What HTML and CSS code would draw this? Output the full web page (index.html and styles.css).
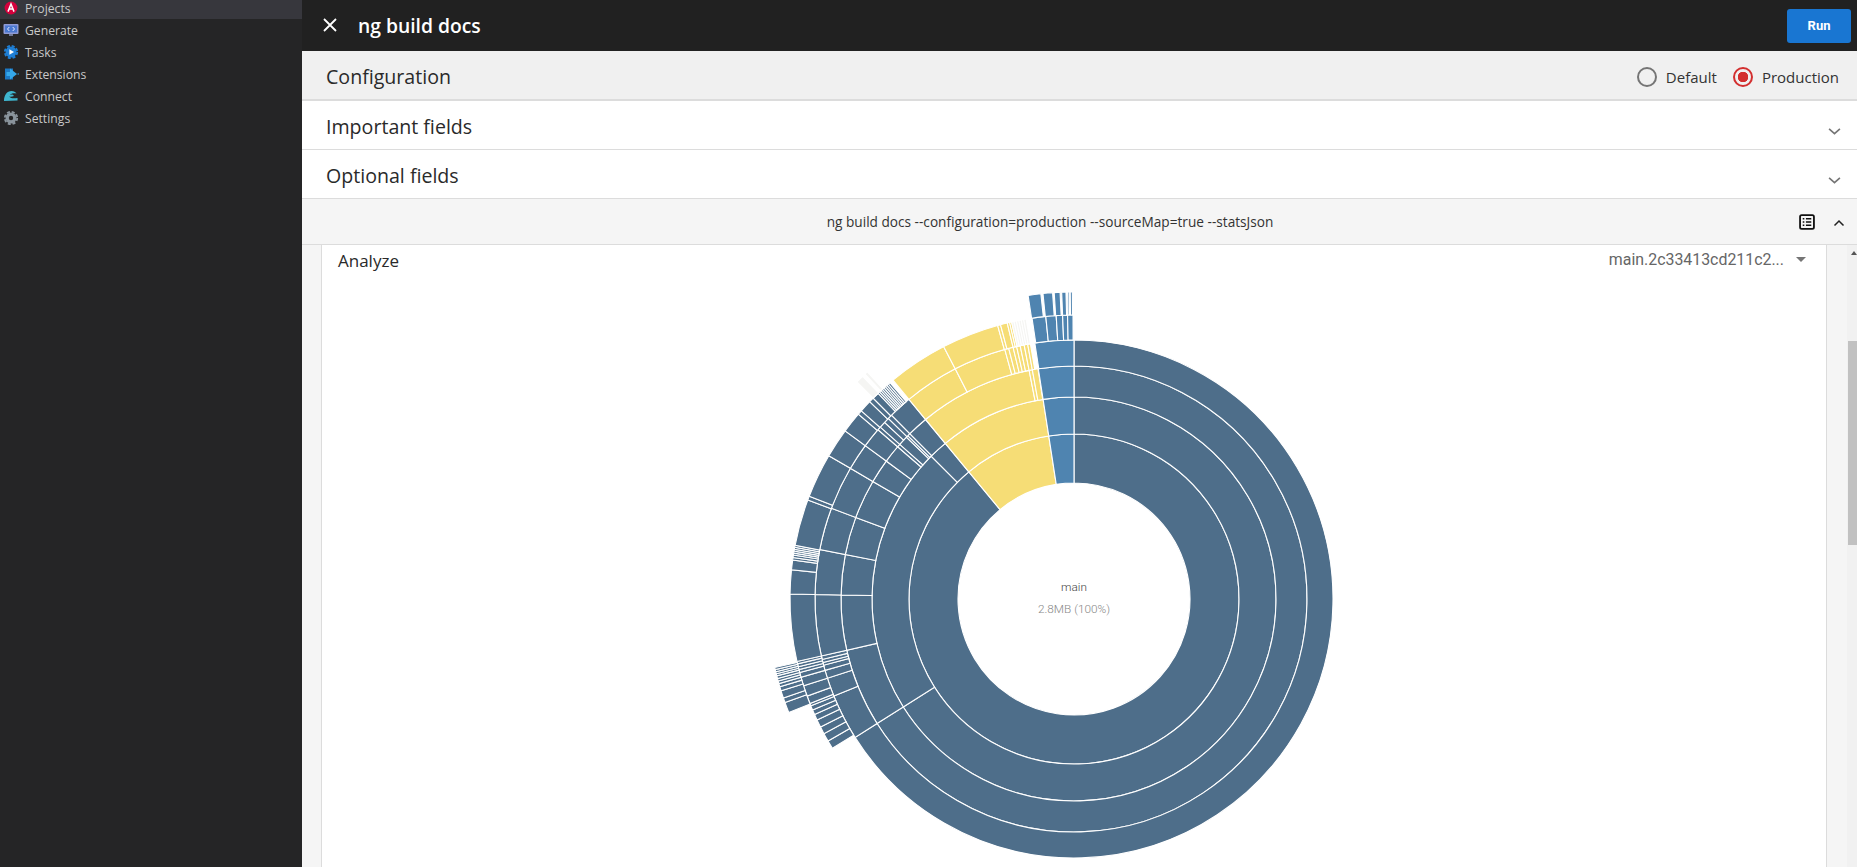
FILE: index.html
```html
<!DOCTYPE html>
<html lang="en">
<head>
<meta charset="utf-8">
<title>ng build docs</title>
<link rel="stylesheet" href="styles.css">
</head>
<body>
<aside class="sidebar">
  <nav class="nav">
    <a class="nav-item nav-item-active">
      <svg class="nav-icon" viewBox="0 0 16 16"><circle cx="8" cy="8" r="6.4" fill="#d5003c"/><path d="M5 11.6 8 4l3 7.6M6.1 9h3.8" fill="none" stroke="#fff" stroke-width="1.5"/></svg>
      <span>Projects</span>
    </a>
    <a class="nav-item">
      <svg class="nav-icon" viewBox="0 0 16 16"><rect x="0.5" y="2" width="15" height="10" rx="1" fill="#8f9bd6"/><rect x="2" y="3.5" width="12" height="7" fill="#4a78d0"/><path d="M6.3 5 4.5 7l1.8 2M9.7 5l1.8 2-1.8 2" fill="none" stroke="#e6ebff" stroke-width="1"/><rect x="6" y="12" width="4" height="2" fill="#6f7896"/></svg>
      <span>Generate</span>
    </a>
    <a class="nav-item">
      <svg class="nav-icon" viewBox="0 0 16 16"><circle cx="8" cy="8" r="5.500" fill="#1f7fd6"/><circle cx="8" cy="8" r="6.200" fill="none" stroke="#1f7fd6" stroke-width="1.800" stroke-dasharray="3 1.870"/><path d="M6.400 5.200 11 8l-4.600 2.800z" fill="#fff"/></svg>
      <span>Tasks</span>
    </a>
    <a class="nav-item">
      <svg class="nav-icon" viewBox="0 0 16 16"><rect x="2" y="2.500" width="8" height="11" fill="#1c79c4"/><path d="M7 2.500 14 8l-7 5.500V10H3.500V6H7z" fill="#35a8ea"/><path d="M14.500 8H16" stroke="#35a8ea"/></svg>
      <span>Extensions</span>
    </a>
    <a class="nav-item">
      <svg class="nav-icon" viewBox="0 0 16 16"><path d="M1 13c0-6 3-10 7.500-10 2.500 0 4 1 5 2.500-2-.6-5.500-.6-6.500 1.500 1.500-1 3.500-.5 4 1-2 .7-3 1-5 .5 1.500 2 5 2 8.500 1.500V12.500z" fill="#3fb6cf"/></svg>
      <span>Connect</span>
    </a>
    <a class="nav-item">
      <svg class="nav-icon" viewBox="0 0 16 16"><circle cx="8" cy="8" r="5.500" fill="#8a949c"/><circle cx="8" cy="8" r="6.200" fill="none" stroke="#8a949c" stroke-width="1.800" stroke-dasharray="3 1.870"/><circle cx="8" cy="8" r="2.200" fill="#252526"/></svg>
      <span>Settings</span>
    </a>
  </nav>
</aside>
<main class="main">
  <header class="topbar">
    <svg class="close-icon" viewBox="0 0 14 14"><path d="M1 1l12 12M13 1 1 13" fill="none" stroke="#fff" stroke-width="1.800"/></svg>
    <h1 class="title">ng build docs</h1>
    <button class="run-button">Run</button>
  </header>
  <section class="row row-config">
    <span class="row-label">Configuration</span>
    <div class="radios">
      <label class="radio-item"><span class="radio"></span>Default</label>
      <label class="radio-item"><span class="radio radio-on"></span>Production</label>
    </div>
  </section>
  <section class="row row-field">
    <span class="row-label">Important fields</span>
    <svg class="chevron" viewBox="0 0 12 8"><path d="M1 1.500 6 6l5-4.500" fill="none" stroke="#757575" stroke-width="1.500"/></svg>
  </section>
  <section class="row row-field">
    <span class="row-label">Optional fields</span>
    <svg class="chevron" viewBox="0 0 12 8"><path d="M1 1.500 6 6l5-4.500" fill="none" stroke="#757575" stroke-width="1.500"/></svg>
  </section>
  <section class="command-bar">
    <span class="command">ng build docs --configuration=production --sourceMap=true --statsJson</span>
    <svg class="list-icon" viewBox="0 0 15 15"><rect x="1" y="1" width="13" height="13" rx="1.500" fill="none" stroke="#111" stroke-width="1.700"/><path d="M3.500 4.500h1.500M3.500 7.500h1.500M3.500 10.500h1.500M6.500 4.500h5M6.500 7.500h5M6.500 10.500h5" stroke="#111" stroke-width="1.300"/></svg>
    <svg class="chevron-up" viewBox="0 0 12 8"><path d="M1.500 6.500 6 2l4.500 4.500" fill="none" stroke="#222" stroke-width="1.500"/></svg>
  </section>
  <section class="content">
    <div class="card">
      <div class="card-head">
        <span class="card-title">Analyze</span>
        <div class="select"><span>main.2c33413cd211c2...</span><span class="caret"></span></div>
      </div>
      <div class="chart-wrap">
        <svg id="sunburst" class="chart" viewBox="-320 -320 640 640" width="640" height="640"></svg>
      </div>
    </div>
    <div class="scrollbar">
      <span class="scroll-arrow"></span>
      <span class="scroll-thumb"></span>
    </div>
  </section>
</main>
<script src="chart.js"></script>
</body>
</html>
```
FILE: styles.css
```css
* { box-sizing: border-box; }
html, body { height: 100%; }
body {
  margin: 0;
  display: flex;
  overflow: hidden;
  font-family: "Open Sans", "Noto Sans", sans-serif;
  background: #fff;
}
.sidebar {
  width: 302px;
  flex: none;
  background: #252526;
  overflow: hidden;
}
.nav { margin-top: -3px; }
.nav-item {
  display: flex;
  align-items: center;
  height: 22px;
  padding-left: 3px;
  gap: 6px;
  color: #c8c8c8;
  font-size: 12.200px;
}
.nav-item-active { background: #37373d; }
.nav-icon { width: 16px; height: 16px; flex: none; }
.main {
  flex: 1;
  min-width: 0;
  display: flex;
  flex-direction: column;
}
.topbar {
  height: 51px;
  flex: none;
  display: flex;
  align-items: center;
  background: #212121;
  padding: 0 6px 0 21px;
}
.close-icon { width: 14px; height: 14px; margin-right: 21px; margin-top: -1px; }
.title {
  margin: 0;
  flex: 1;
  color: #fff;
  font-size: 19.300px;
  font-weight: 600;
}
.run-button {
  width: 64px;
  height: 34px;
  border: 0;
  border-radius: 3px;
  background: #1976d2;
  color: #fff;
  font-family: Roboto, sans-serif;
  font-size: 13px;
  font-weight: 700;
}
.row {
  flex: none;
  display: flex;
  align-items: center;
  justify-content: space-between;
  padding-top: 4px;
  padding-left: 24px;
  color: #2a2a2a;
  border-bottom: 1px solid #dcdcdc;
}
.row-config {
  height: 50px;
  background: #f0f0f0;
  padding-right: 18px;
  border-bottom-width: 2px;
}
.row-field {
  height: 49px;
  background: #fff;
  padding-right: 16px;
}
.row-label { font-size: 19.600px; margin-top: -2px; }
.radios { display: flex; gap: 16px; }
.radio-item {
  display: flex;
  align-items: center;
  gap: 9px;
  font-size: 15px;
  color: #333;
}
.radio {
  width: 20px;
  height: 20px;
  border-radius: 50%;
  border: 2px solid #757575;
}
.radio-on {
  border-color: #d32f2f;
  background: radial-gradient(circle, #d32f2f 0 5px, transparent 5.500px);
}
.chevron { width: 13px; height: 9px; margin-top: 8px; }
.command-bar {
  flex: none;
  height: 46px;
  display: flex;
  align-items: center;
  justify-content: center;
  position: relative;
  background: #f5f5f5;
  border-bottom: 1px solid #dcdcdc;
  padding: 0 54px 0 0;
}
.command {
  font-size: 13.650px;
  color: #333;
  margin-right: 5px;
}
.list-icon {
  position: absolute;
  right: 42px;
  top: 15px;
  width: 16px;
  height: 16px;
}
.chevron-up {
  position: absolute;
  right: 12px;
  top: 20px;
  width: 12px;
  height: 8px;
}
.content {
  flex: 1;
  min-height: 0;
  display: flex;
  background: #f5f5f5;
  padding-left: 19px;
  overflow: hidden;
}
.card {
  width: 1506px;
  flex: none;
  background: #fff;
  border-left: 1px solid #dcdcdc;
  border-right: 1px solid #dcdcdc;
  overflow: hidden;
}
.card-head {
  display: flex;
  justify-content: space-between;
  align-items: center;
  height: 34px;
  padding: 0 20px 0 16px;
}
.card-title { font-size: 17px; color: #2a2a2a; margin-top: -4px; }
.select {
  display: flex;
  align-items: center;
  gap: 12px;
  font-family: Roboto, sans-serif;
  font-size: 15.900px;
  color: #666;
  margin-top: -5px;
}
.caret {
  width: 0;
  height: 0;
  border-left: 5px solid transparent;
  border-right: 5px solid transparent;
  border-top: 5px solid #757575;
}
.chart-wrap { display: flex; justify-content: center; }
.chart { flex: none; display: block; }
.chart-name { font: 300 11.800px Roboto, sans-serif; fill: #444; text-anchor: middle; }
.chart-size { font: 300 11.800px Roboto, sans-serif; fill: #888; text-anchor: middle; }
.scrollbar {
  margin-left: 20px;
  flex: 1;
  background: #f1f1f1;
  display: flex;
  flex-direction: column;
  align-items: flex-end;
  padding-top: 6px;
}
.scroll-arrow {
  width: 0;
  height: 0;
  border-left: 3px solid transparent;
  border-right: 3px solid transparent;
  border-bottom: 4px solid #555;
}
.scroll-thumb {
  width: 9px;
  height: 204px;
  margin-top: 86px;
  background: #c1c1c1;
}
```
FILE: chart.js
```js
const DARK = '#4e6e8a', LIGHT = '#4f84b0', YELLOW = '#f6dd76', PALE = '#f5f5f3';
const RADII = [116, 165, 202, 233, 259, 284, 307];
const NS = 'http://www.w3.org/2000/svg';
const svg = document.getElementById('sunburst');

function pt(r, deg) {
  const a = deg * Math.PI / 180;
  return (r * Math.sin(a)).toFixed(2) + ' ' + (-r * Math.cos(a)).toFixed(2);
}

function sector(ring, a, b, color) {
  const r0 = RADII[ring], r1 = RADII[ring + 1];
  const large = b - a > 180 ? 1 : 0;
  const p = document.createElementNS(NS, 'path');
  p.setAttribute('d', `M${pt(r0, a)}A${r0} ${r0} 0 ${large} 1 ${pt(r0, b)}` +
    `L${pt(r1, b)}A${r1} ${r1} 0 ${large} 0 ${pt(r1, a)}Z`);
  p.setAttribute('fill', color);
  p.setAttribute('stroke', '#fff');
  p.setAttribute('stroke-width', '1.100');
  svg.appendChild(p);
}

function band(ring, color, stops) {
  for (let i = 0; i < stops.length - 1; i++) sector(ring, stops[i], stops[i + 1], color);
}

band(0, DARK, [0, 320.4]);
band(0, YELLOW, [320.4, 351.2]);
band(0, LIGHT, [351.2, 360]);

band(1, DARK, [0, 237.7, 315, 320.4]);
band(1, YELLOW, [320.4, 351.2]);
band(1, LIGHT, [351.2, 360]);

band(2, DARK, [0, 237.7, 257.3, 271, 281, 290.5, 300.3, 306.3, 310.8, 311.6, 314, 314.5, 315.2, 320.4]);
band(2, YELLOW, [320.4, 348.9, 349.7, 351.1]);
band(2, LIGHT, [351.2, 360]);

band(3, DARK, [0, 237.7, 248, 252.2, 254, 255.2, 255.8, 256.5, 257.3, 271, 281, 290.5, 300.3, 306.3, 310.8, 311.6, 313, 314.2, 315.2, 320.4]);
band(3, YELLOW, [320.4, 332.7, 344.5, 345.4, 346.4, 347.2, 348, 348.9, 349.7, 350.3]);
band(3, LIGHT, [351.3, 360]);

// the fifth ring only exists on the upper-left part of the chart
band(4, DARK, [238.3, 240, 241.7, 243.2, 244.8, 246, 247, 247.9, 248.4]);
band(4, DARK, [248.4, 250, 252.2, 254, 255, 255.6, 256.2, 256.8, 257.3, 271, 275.9, 277.9, 278.4, 278.9, 279.3, 279.7, 280.1, 280.5, 280.9]);
band(4, DARK, [280.9, 290.4, 291.2, 300.3, 306.3, 310.6, 311.5, 314, 315, 316.4, 316.8, 317.2, 317.6, 318, 318.4, 318.8, 319.2, 319.6]);
band(4, YELLOW, [320.4, 332.7, 344.4, 345, 346.4, 346.9, 347.3]);
band(4, PALE, [347.3, 347.8, 348.3, 348.8, 349.3, 349.8, 350.3]);
band(4, LIGHT, [351.5, 354.3, 356.4, 357.7, 358.7, 359.8]);

// the sixth ring: only a few narrow sectors reach it
band(5, DARK, [248.3, 250.3, 251.2, 252.6, 253.4, 254, 254.5, 255, 255.5, 255.9, 256.3, 256.7, 257.1]);
sector(5, 315, 316.5, PALE);
sector(5, 317.1, 317.7, PALE);
band(5, LIGHT, [351.4, 353.8]);
band(5, LIGHT, [354.2, 356]);
band(5, LIGHT, [356.3, 357.4]);
band(5, LIGHT, [357.7, 358.5]);
band(5, LIGHT, [358.8, 359.1]);
band(5, LIGHT, [359.3, 359.7]);

function label(text, y, cls) {
  const t = document.createElementNS(NS, 'text');
  t.setAttribute('x', 0);
  t.setAttribute('y', y);
  t.setAttribute('class', cls);
  t.textContent = text;
  svg.appendChild(t);
}
label('main', -8, 'chart-name');
label('2.8MB (100%)', 14, 'chart-size');
```
